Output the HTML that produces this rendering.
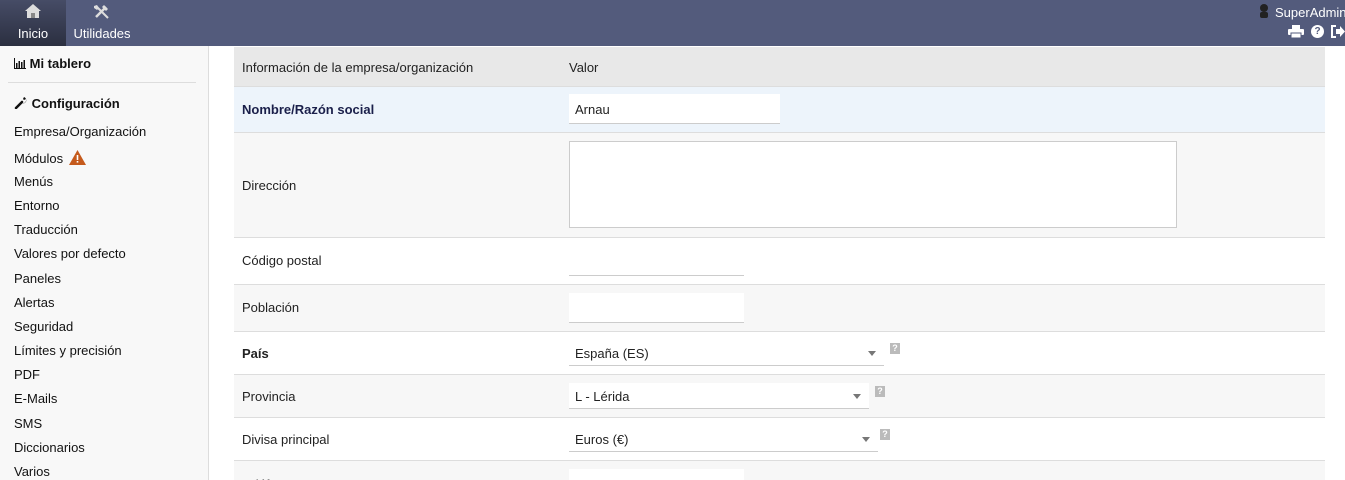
<!DOCTYPE html>
<html style="overflow:hidden;height:480px"><head><meta charset="utf-8"><style>
*{box-sizing:border-box;margin:0;padding:0}
body{width:1345px;height:480px;overflow:hidden;font-family:"Liberation Sans",sans-serif;font-size:13px;color:#222;background:#fff;position:relative}
.top{position:absolute;left:0;top:0;width:1345px;height:46px;background:#535b7c}
.tab{position:absolute;top:0;height:46px;color:#fff;font-size:13px;text-align:center}
.side{position:absolute;left:0;top:46px;width:209px;height:434px;background:#f8f8f8;border-right:1px solid #ddd}
.side div{position:absolute;left:14px;font-size:13px;color:#111}
.tbl{position:absolute;left:234px;top:46px;width:1091px;height:434px;overflow:hidden}
.row{position:absolute;left:0;width:1091px;border-bottom:1px solid #ddd}
.lab{position:absolute;left:8px}
.inp{position:absolute;left:335px;background:#fff;border-bottom:1px solid #ccc}
.sel{position:absolute;left:335px;border-bottom:1px solid #ccc;height:26px}
.sel span{position:absolute;left:6px;top:6px}
.arr{position:absolute;right:8px;top:11px;width:0;height:0;border-left:4px solid transparent;border-right:4px solid transparent;border-top:5px solid #777}
.q{position:absolute;width:10px;height:11px;background:#bbb;color:#fff;font-size:9px;font-weight:bold;text-align:center;line-height:11px}
</style></head><body>
<div class="top">
 <div class="tab" style="left:0;width:66px;background:linear-gradient(#464c66,#2b2f40)">
  <svg style="position:absolute;left:24px;top:3px" width="18" height="16" viewBox="0 0 18 16"><path d="M9 1L1 8h2v7h12V8h2z" fill="#ddd"/><rect x="7" y="10" width="4" height="5" fill="#888"/></svg>
  <div style="position:absolute;left:0;width:66px;top:26px">Inicio</div></div>
 <div class="tab" style="left:66px;width:72px">
  <svg style="position:absolute;left:27px;top:4px" width="18" height="16" viewBox="0 0 18 16"><path d="M3 13L13 3" stroke="#ddd" stroke-width="2.5"/><path d="M11 1l4 4-2 2-4-4z" fill="#ddd"/><path d="M4 3l11 11" stroke="#ddd" stroke-width="2"/><path d="M1 2l3-1 2 3-2 2-3-2z" fill="#ddd"/></svg>
  <div style="position:absolute;left:0;width:72px;top:26px">Utilidades</div></div>
 <svg style="position:absolute;left:1259px;top:3px" width="10" height="16"><circle cx="5" cy="5" r="4" fill="#222"/><rect x="1" y="9" width="8" height="6" rx="2" fill="#222"/></svg>
 <div style="position:absolute;left:1275px;top:5px;color:#fff;font-size:13px;white-space:nowrap">SuperAdmin</div>
 <svg style="position:absolute;left:1288px;top:25px" width="16" height="13" viewBox="0 0 16 13"><rect x="4" y="0" width="8" height="4" fill="#fff"/><rect x="0" y="4" width="16" height="6" rx="1" fill="#fff"/><rect x="3" y="8" width="10" height="5" fill="#fff" stroke="#535b7c"/></svg>
 <div style="position:absolute;left:1311px;top:25px;width:13px;height:13px;background:#fff;border-radius:50%;color:#535b7c;font-size:10px;font-weight:bold;text-align:center;line-height:13px">?</div>
 <svg style="position:absolute;left:1331px;top:25px" width="14" height="13" viewBox="0 0 14 13"><path d="M5 1H1v11h4" stroke="#fff" stroke-width="2" fill="none"/><path d="M5 4h4V1l5 5.5-5 5.5V9H5z" fill="#fff"/></svg>
</div>
<div class="side">
 <div style="top:10px;font-weight:bold"><svg width="12" height="11" style="vertical-align:-1px"><path d="M0.5 0v10.5H12" stroke="#111" fill="none"/><rect x="2" y="5" width="1.5" height="5" fill="#111"/><rect x="4.5" y="3" width="1.5" height="7" fill="#111"/><rect x="7" y="4" width="1.5" height="6" fill="#111"/><rect x="9.5" y="2" width="1.5" height="8" fill="#111"/></svg> Mi tablero</div>
 <div style="top:36px;left:8px;width:188px;height:1px;background:#ddd"></div>
 <div style="top:50px;font-weight:bold"><svg width="14" height="13" style="vertical-align:-1px"><path d="M2 12L8 6" stroke="#111" stroke-width="2.5" stroke-linecap="round"/><path d="M8 7a3 3 0 1 0 2-6l-1 2 1 1 2-1a3 3 0 0 1-4 4z" fill="#111"/></svg> Configuración</div>
 <div style="top:78px">Empresa/Organización</div>
 <div style="top:104px">Módulos <svg width="17" height="15" style="vertical-align:-2px;margin-left:2px"><path d="M8.5 0L17 15H0z" fill="#c55a1c"/><rect x="7.7" y="5" width="1.6" height="5" fill="#fff"/><rect x="7.7" y="11" width="1.6" height="1.6" fill="#fff"/></svg></div>
 <div style="top:128px">Menús</div>
 <div style="top:152px">Entorno</div>
 <div style="top:176px">Traducción</div>
 <div style="top:200px">Valores por defecto</div>
 <div style="top:225px">Paneles</div>
 <div style="top:249px">Alertas</div>
 <div style="top:273px">Seguridad</div>
 <div style="top:297px">Límites y precisión</div>
 <div style="top:321px">PDF</div>
 <div style="top:345px">E-Mails</div>
 <div style="top:370px">SMS</div>
 <div style="top:394px">Diccionarios</div>
 <div style="top:418px">Varios</div>
</div>
<div class="tbl">
 <div class="row" style="top:1px;height:40px;background:#e8e8e8"><div class="lab" style="top:13px">Información de la empresa/organización</div><div class="lab" style="left:335px;top:13px">Valor</div></div>
 <div class="row" style="top:41px;height:46px;background:#edf4fb"><div class="lab" style="top:15px;font-weight:bold;color:#1a1f4a">Nombre/Razón social</div><div class="inp" style="top:7px;width:211px;height:30px;padding:8px 6px">Arnau</div></div>
 <div class="row" style="top:87px;height:105px;background:#f7f7f7"><div class="lab" style="top:45px">Dirección</div><div style="position:absolute;left:335px;top:8px;width:608px;height:87px;background:#fff;border:1px solid #ccc"></div></div>
 <div class="row" style="top:192px;height:47px;background:#fff"><div class="lab" style="top:15px">Código postal</div><div class="inp" style="top:8px;width:175px;height:30px"></div></div>
 <div class="row" style="top:239px;height:47px;background:#f7f7f7"><div class="lab" style="top:15px">Población</div><div class="inp" style="top:8px;width:175px;height:30px"></div></div>
 <div class="row" style="top:286px;height:43px;background:#fff"><div class="lab" style="top:14px;font-weight:bold">País</div><div class="sel" style="top:8px;width:315px"><span>España (ES)</span><div class="arr"></div></div><div class="q" style="left:656px;top:11px">?</div></div>
 <div class="row" style="top:329px;height:43px;background:#f7f7f7"><div class="lab" style="top:14px">Provincia</div><div class="sel" style="top:8px;width:300px;background:#fff"><span>L - Lérida</span><div class="arr"></div></div><div class="q" style="left:641px;top:11px">?</div></div>
 <div class="row" style="top:372px;height:43px;background:#fff"><div class="lab" style="top:14px">Divisa principal</div><div class="sel" style="top:8px;width:309px"><span>Euros (€)</span><div class="arr"></div></div><div class="q" style="left:646px;top:11px">?</div></div>
 <div class="row" style="top:415px;height:40px;background:#f7f7f7;border:none"><div class="lab" style="top:16px">Teléfono</div><div class="inp" style="top:8px;width:175px;height:30px"></div></div>
</div>
</body></html>
